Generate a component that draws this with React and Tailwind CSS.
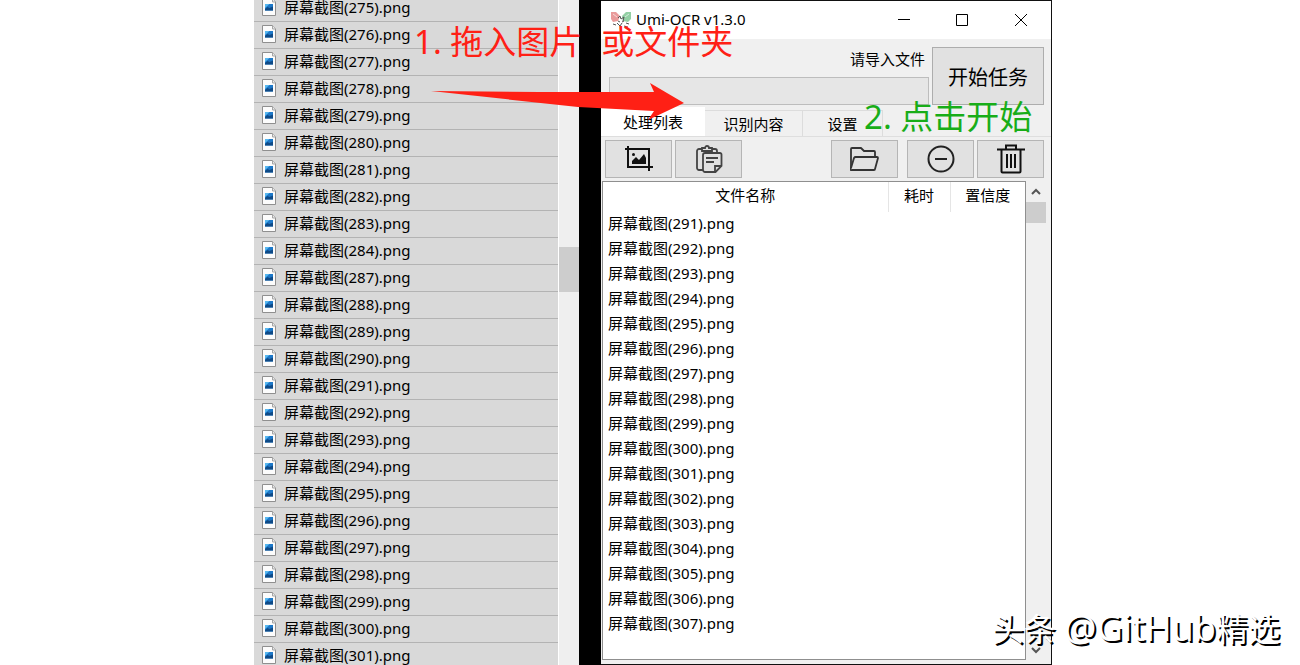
import { useState } from 'react'

const explorerFiles = [
  275, 276, 277, 278, 279, 280, 281, 282, 283, 284, 287, 288, 289, 290, 291,
  292, 293, 294, 295, 296, 297, 298, 299, 300, 301,
]

const queuedFiles = [
  291, 292, 293, 294, 295, 296, 297, 298, 299, 300, 301, 302, 303, 304, 305,
  306, 307,
]

const tabs = [
  { name: '处理列表', width: 'w-[104px]' },
  { name: '识别内容', width: 'w-[98px]' },
  { name: '设置', width: 'w-20' },
]

function ImageFileIcon() {
  return (
    <svg width="15" height="18" viewBox="0 0 15 18" className="shrink-0">
      <path d="M.5.5h10l3 3.500v13.500H.5z" fill="#fcfcfc" stroke="#8f8f8f" />
      <path d="M10.500.5v3.500h3" fill="#e8e8e8" stroke="#a5a5a5" />
      <rect x="3" y="6" width="8" height="6.500" fill="#1d78c8" />
      <path d="M3 6h4.500L3 10z" fill="#58b8f0" />
      <path d="M3 12.500v-1.500l2.500-2 2 1 3.500-1.500v4z" fill="#0f4a86" />
    </svg>
  )
}

function AppLogo() {
  return (
    <svg width="22" height="18" viewBox="0 0 22 18" className="shrink-0">
      <path d="M1 1h5l4 4-2 5-5 1-2-3z" fill="#e99a9a" />
      <path d="M12 5l4-4h5v7l-3 3-5-1z" fill="#93cfa4" />
      <path d="M3 3l4 3M19 3l-4 3" stroke="#fff" strokeOpacity=".6" fill="none" />
      <path
        d="M8 7l2-2 1 3 3-2-1 4M8 10l2 1M12 11l2-1M3 13l3 1M7 12l3 3M12 12l-2 3M16 12l3 1M14 15l4 1"
        stroke="#555"
        fill="none"
      />
    </svg>
  )
}

function CropImageIcon() {
  return (
    <svg width="30" height="28" viewBox="0 0 30 28" fill="none" stroke="#111" strokeWidth="2">
      <path d="M4 1v21h25M1 4h24v22" />
      <path d="M8 19v-3l4-4 3 3 5-6 2 4v6z" fill="#111" stroke="none" />
      <circle cx="9.5" cy="9.5" r="1.5" fill="#111" stroke="none" />
    </svg>
  )
}

function PasteIcon() {
  return (
    <svg width="28" height="30" viewBox="0 0 28 30" fill="none" stroke="#444" strokeWidth="1.8">
      <path d="M8 26H4a2 2 0 0 1-2-2V7a2 2 0 0 1 2-2h3M17 5h3a2 2 0 0 1 2 2v1" />
      <path d="M7 7V4h3a2 2 0 0 1 4 0h3v3z" />
      <path d="M10 9h15a1.500 1.500 0 0 1 1.500 1.500V22l-6 6H10a2 2 0 0 1-2-2V11a2 2 0 0 1 2-2z" />
      <path d="M20 28v-6h6M11 14h12M11 18h8" />
    </svg>
  )
}

function FolderIcon() {
  return (
    <svg width="30" height="26" viewBox="0 0 30 26" fill="none" stroke="#333" strokeWidth="1.800" strokeLinejoin="round">
      <path d="M1 22V3a1 1 0 0 1 1-1h9l3 3h10a1 1 0 0 1 1 1v4" />
      <path d="M1 22l3-10a2 2 0 0 1 2-1h21a1 1 0 0 1 1 1l-3 11a1 1 0 0 1-1 1H2a1 1 0 0 1-1-2z" />
    </svg>
  )
}

function MinusCircleIcon() {
  return (
    <svg width="28" height="28" viewBox="0 0 28 28" fill="none" stroke="#222" strokeWidth="2">
      <circle cx="14" cy="14" r="12.500" />
      <path d="M8 14h12" />
    </svg>
  )
}

function TrashIcon() {
  return (
    <svg width="28" height="30" viewBox="0 0 28 30" fill="none" stroke="#111" strokeWidth="2">
      <path d="M0 5.500h28M9 5V1.500h10V5M4.500 6v21.500a1 1 0 0 0 1 1h17a1 1 0 0 0 1-1V6" />
      <path d="M10 10v14M14 10v14M18 10v14" />
    </svg>
  )
}

function ToolButton({ label, className = '', children }) {
  return (
    <button
      type="button"
      aria-label={label}
      className={`flex h-[38px] w-[67px] items-center justify-center border border-[#b5b5b5] bg-[#e1e1e1] hover:bg-[#e8f1fa] ${className}`}
    >
      {children}
    </button>
  )
}

function ScrollArrow({ down }) {
  return (
    <svg width="10" height="7" viewBox="0 0 10 7" fill="none" stroke="#555" strokeWidth="2">
      <path d={down ? 'M1 1l4 4 4-4' : 'M1 6l4-4 4 4'} />
    </svg>
  )
}

function ExplorerPane() {
  return (
    <section className="flex w-[325px] shrink-0 bg-[#efefef]">
      <ul className="-mt-[5px] flex-1 border-r border-white bg-[#d9d9d9]">
        {explorerFiles.map((id) => (
          <li
            key={id}
            className="flex h-[27px] items-center gap-[7px] border-b border-[#b3b3b3] pb-0.5 pl-2 text-[15px]"
          >
            <ImageFileIcon />
            <span>屏幕截图({id}).png</span>
          </li>
        ))}
      </ul>
      <div className="w-5 pt-[247px]">
        <div className="h-[45px] bg-[#cdcdcd]" />
      </div>
    </section>
  )
}

function TitleBar() {
  return (
    <header className="flex h-[38px] shrink-0 items-center bg-white pl-[9px]">
      <AppLogo />
      <h1 className="ml-1 flex-1 pb-0.5 text-[15px]">Umi-OCR v1.3.0</h1>
      <button type="button" aria-label="最小化" className="flex h-full w-[58px] items-center justify-center">
        <svg width="12" height="12" viewBox="0 0 12 12" stroke="#000">
          <path d="M0 5.500h12" />
        </svg>
      </button>
      <button type="button" aria-label="最大化" className="flex h-full w-[58px] items-center justify-center">
        <svg width="12" height="12" viewBox="0 0 12 12" fill="none" stroke="#000">
          <path d="M.5.5h11v11H.5z" />
        </svg>
      </button>
      <button type="button" aria-label="关闭" className="flex h-full w-[60px] items-center justify-center">
        <svg width="12" height="12" viewBox="0 0 12 12" stroke="#000">
          <path d="M0 0l12 12M12 0L0 12" />
        </svg>
      </button>
    </header>
  )
}

function FileTable() {
  return (
    <div className="flex min-h-0 flex-1">
      <div className="flex-1 border border-[#8f8f8f] bg-white">
        <table className="w-full table-fixed text-[15px]">
          <thead>
            <tr className="h-[30px]">
              <th className="border-r border-[#e5e5e5] pb-[3px] font-normal">文件名称</th>
              <th className="w-[62px] border-r border-[#e5e5e5] pb-[3px] font-normal">耗时</th>
              <th className="w-[75px] pb-[3px] font-normal">置信度</th>
            </tr>
          </thead>
          <tbody>
            {queuedFiles.map((id) => (
              <tr key={id} className="h-[25px]">
                <td className="pb-0.5 pl-[5px]">屏幕截图({id}).png</td>
                <td />
                <td />
              </tr>
            ))}
          </tbody>
        </table>
      </div>
      <div className="flex w-5 flex-col items-center bg-[#f0f0f0]">
        <div className="flex h-[21px] items-center">
          <ScrollArrow />
        </div>
        <div className="h-[21px] w-full bg-[#cdcdcd]" />
        <div className="mt-auto flex h-5 items-center">
          <ScrollArrow down />
        </div>
      </div>
    </div>
  )
}

function OcrWindow() {
  const [activeTab, setActiveTab] = useState('处理列表')

  return (
    <section className="flex w-[451px] shrink-0 flex-col border-y border-r border-[#111] bg-[#f0f0f0]">
      <TitleBar />

      <div className="flex h-[69px] gap-[3px] pt-2 pr-[7px] pl-2">
        <div className="flex flex-1 flex-col">
          <p className="h-[30px] pt-0.5 pr-1 text-right text-[15px] leading-5">请导入文件</p>
          <div role="progressbar" aria-label="任务进度" className="h-7 border border-[#bdbdbd] bg-[#e6e6e6]" />
        </div>
        <button type="button" className="h-[58px] w-28 border border-[#adadad] bg-[#e1e1e1] pt-1 text-xl">
          开始任务
        </button>
      </div>

      <div role="tablist" className="flex h-[29px] shrink-0 items-end border-b border-[#dedede]">
        {tabs.map((tab) => (
          <button
            key={tab.name}
            type="button"
            role="tab"
            aria-selected={activeTab === tab.name}
            onClick={() => setActiveTab(tab.name)}
            className={`${tab.width} text-[15px] leading-5 ${
              activeTab === tab.name
                ? 'h-[29px] bg-white'
                : 'h-[26px] border-t border-r border-[#dcdcdc]'
            }`}
          >
            {tab.name}
          </button>
        ))}
      </div>

      <div className="flex min-h-0 flex-1 flex-col pr-[5px] pb-1 pl-px">
        <div className="flex shrink-0 gap-[3px] py-[3px] pr-0.5 pl-[3px]">
          <ToolButton label="截图">
            <CropImageIcon />
          </ToolButton>
          <ToolButton label="粘贴">
            <PasteIcon />
          </ToolButton>
          <ToolButton label="打开文件" className="ml-auto">
            <FolderIcon />
          </ToolButton>
          <ToolButton label="移除" className="ml-1.5">
            <MinusCircleIcon />
          </ToolButton>
          <ToolButton label="清空">
            <TrashIcon />
          </ToolButton>
        </div>
        <FileTable />
      </div>
    </section>
  )
}

function Annotations() {
  return (
    <div className="pointer-events-none absolute inset-0">
      <p className="absolute top-[22px] left-[160px] flex gap-[19px] text-[33px] leading-10 whitespace-nowrap text-[#ff2015]">
        <span>1. 拖入图片</span>
        <span>或文件夹</span>
      </p>
      <svg
        width="254"
        height="38"
        viewBox="0 0 254 38"
        className="absolute top-[82px] left-[177px]"
        fill="#ff2015"
      >
        <path d="M0 9l108 1h115l-4-9 34 20-36 17 6-9-76-4z" />
      </svg>
      <p className="absolute top-[97px] left-[610px] text-[33px] leading-10 whitespace-nowrap text-[#18ad18]">
        2. 点击开始
      </p>
    </div>
  )
}

function App() {
  return (
    <main className="relative flex h-screen justify-center overflow-hidden bg-white pl-1.5 font-['Noto_Sans','Noto_Sans_CJK_SC',sans-serif] text-black">
      <div className="relative flex">
        <ExplorerPane />
        <div className="w-[22px] shrink-0 bg-black" />
        <OcrWindow />
        <Annotations />
      </div>
      <p className="absolute right-5 bottom-3 text-[32px] leading-[48px] whitespace-nowrap text-white [text-shadow:2px_2px_0_#000]">
        头条 <span className="text-4xl leading-[48px]">@GitHub</span>精选
      </p>
    </main>
  )
}

export default App
